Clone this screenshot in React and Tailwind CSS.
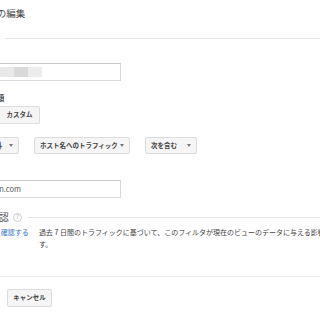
function Arrow() {
  return (
    <svg width="4" height="3" viewBox="0 0 4 3" className="shrink-0">
      <path d="M0 0H4L2 3Z" fill="#777" />
    </svg>
  )
}

function Dropdown({ label, className }) {
  return (
    <div
      className={`flex h-[17px] items-center justify-between whitespace-nowrap rounded-[2px] border border-[#dcdcdc] bg-[#f5f5f5] px-[5px] text-[6.5px] font-bold text-[#444] ${className}`}
    >
      <span>{label}</span>
      <Arrow />
    </div>
  )
}

function SectionHeader({ title, help, className }) {
  return (
    <div className={`flex items-center ${className}`}>
      <span className="whitespace-nowrap text-[10px] leading-[12px] text-[#555]">{title}</span>
      {help ? (
        <span className="ml-[4px] flex h-[9px] w-[9px] shrink-0 items-center justify-center rounded-full border border-[#ccc] text-[6px] leading-none text-[#aaa]">
          ?
        </span>
      ) : null}
      <div className="ml-[6px] h-px flex-1 bg-[#e6e6e6]" />
    </div>
  )
}

export default function App() {
  return (
    <div className="h-[320px] w-[320px] overflow-hidden bg-white font-['Noto_Sans_CJK_JP','Noto_Sans',sans-serif] text-[#444]">
      <h1 className="ml-[-41px] mt-[6px] whitespace-nowrap text-[9.5px] leading-[14px] font-normal text-[#444]">
        フィルタの編集
      </h1>

      <SectionHeader title="フィルタ情報" className="ml-[-61px] mt-[12px]" />

      <div className="ml-[-40px] mt-[19px] flex h-[18px] w-[161px] items-center border border-[#d9d9d9] border-t-[#c8c8c8] bg-white pl-[39px]">
        <div className="h-[10px] w-[14px] bg-[#e8e8e8]" />
        <div className="h-[10px] w-[14px] bg-[#d9d9d9]" />
        <div className="h-[10px] w-[14px] bg-[#ececec]" />
      </div>

      <p className="ml-[-48px] mt-[12px] whitespace-nowrap text-[7.5px] leading-[10px] font-bold text-[#444]">
        フィルタの種類
      </p>

      <div className="ml-[-40px] mt-[3px] flex">
        <button className="flex h-[18px] w-[40px] items-center justify-center rounded-l-[2px] border border-[#dcdcdc] bg-[#f5f5f5] text-[6.5px] font-bold text-[#444]">
          定義済み
        </button>
        <button className="flex h-[18px] w-[40px] items-center justify-center rounded-r-[2px] border border-l-0 border-[#dcdcdc] bg-[#f5f5f5] text-[6.5px] font-bold text-[#444]">
          カスタム
        </button>
      </div>

      <div className="ml-[-17px] mt-[13px] flex gap-[15px]">
        <Dropdown label="除外" className="w-[36px]" />
        <Dropdown label="ホスト名へのトラフィック" className="w-[96px]" />
        <Dropdown label="次を含む" className="w-[52px]" />
      </div>

      <div className="ml-[-60px] mt-[26px] flex h-[18px] w-[181px] items-center whitespace-nowrap border border-[#d9d9d9] border-t-[#c8c8c8] bg-white pl-[4px] text-[7.5px] text-[#555]">
        example.domain.com
      </div>

      <SectionHeader title="フィルタの確認" help className="ml-[-61px] mt-[13px]" />

      <div className="ml-[-48px] mt-[3px] flex gap-[10px] text-[7px] leading-[12px]">
        <a className="shrink-0 whitespace-nowrap text-[#3b78c8]">このフィルタを確認する</a>
        <div className="whitespace-nowrap text-[#444]">
          <p>過去 7 日間のトラフィックに基づいて、このフィルタが現在のビューのデータに与える影響を確認しま</p>
          <p>す。</p>
        </div>
      </div>

      <div className="mt-[26px] h-px bg-[#ebebeb]" />

      <div className="ml-[-40px] mt-[12px] flex gap-[7px]">
        <button className="flex h-[18px] w-[40px] items-center justify-center rounded-[2px] border border-[#3079ed] bg-[#4d90fe] text-[6.5px] font-bold text-white">
          保存
        </button>
        <button className="flex h-[18px] w-[45px] items-center justify-center rounded-[2px] border border-[#dcdcdc] bg-[#f5f5f5] text-[6.5px] font-bold text-[#444]">
          キャンセル
        </button>
      </div>
    </div>
  )
}
